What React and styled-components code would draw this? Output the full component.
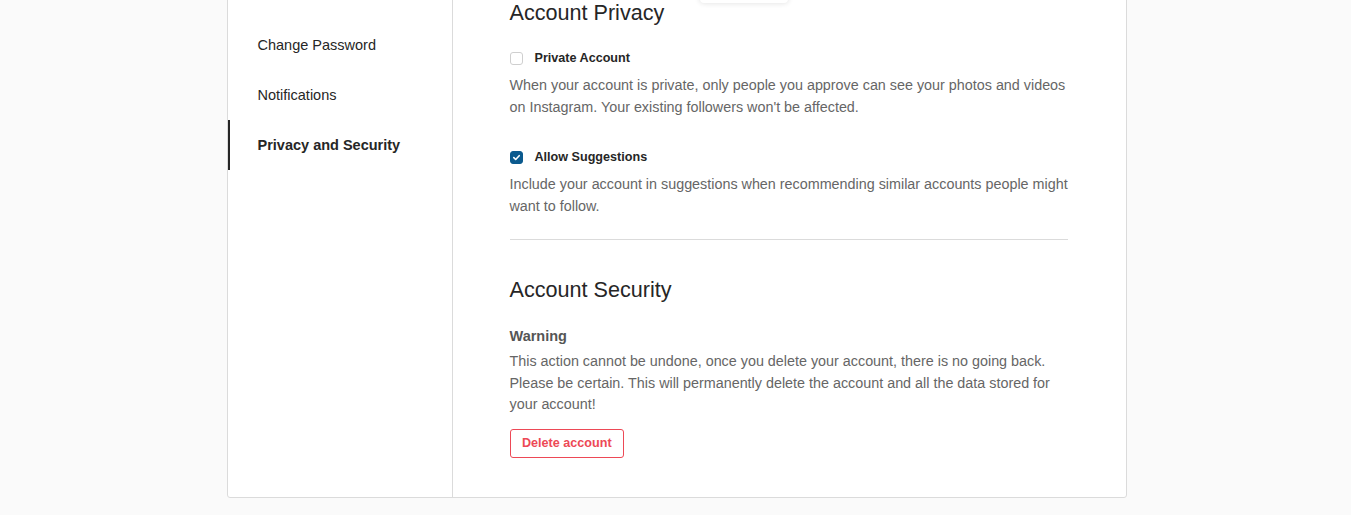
import styled, { createGlobalStyle } from "styled-components";

const GlobalStyle = createGlobalStyle`
  html, body {
    margin: 0;
    padding: 0;
    background: #fafafa;
    font-family: "Liberation Sans", Arial, sans-serif;
    color: #262626;
  }
`;

const Page = styled.div`
  position: relative;
  height: 515px;
  overflow: hidden;
  display: flex;
  justify-content: center;
  padding-left: 2px;
`;

// dropdown menu peeking from the navbar above (scrolled out of view)
const MenuEdge = styled.div`
  position: absolute;
  top: -60px;
  left: 700px;
  width: 88px;
  height: 63px;
  background: #fff;
  border-radius: 4px;
  box-shadow: 0 0 5px 1px rgba(0, 0, 0, 0.0975);
  z-index: 2;
`;

const Card = styled.div`
  width: 898px;
  margin-top: -40px;
  height: 536px;
  display: flex;
  background: #fff;
  border: 1px solid #dbdbdb;
  border-radius: 3px;
`;

const Sidebar = styled.ul`
  list-style: none;
  margin: 0;
  padding: 59px 0 0;
  width: 224px;
  border-right: 1px solid #dbdbdb;
  flex-shrink: 0;
`;

const NavItem = styled.li`
  height: 50px;
  display: flex;
  align-items: center;
  padding-left: 28px;
  border-left: 2px solid ${(p) => (p.$active ? "#262626" : "transparent")};
  font-size: 14.5px;
  font-weight: ${(p) => (p.$active ? 700 : 400)};
  color: #262626;
`;

const Content = styled.div`
  flex: 1;
  padding: 39px 58px 0 57px;
`;

const SectionTitle = styled.h2`
  margin: 0;
  font-size: 21.6px;
  font-weight: 400;
  line-height: 26px;
  color: #262626;
`;

const Option = styled.div`
  margin-top: ${(p) => p.$top}px;
`;

const CheckRow = styled.label`
  display: flex;
  align-items: center;
  gap: 12px;
  height: 18px;
  font-size: 12.6px;
  font-weight: 700;
  color: #262626;
`;

const Box = styled.span`
  width: 13px;
  height: 13px;
  box-sizing: border-box;
  border-radius: 3px;
  border: 1px solid ${(p) => (p.$checked ? "#0b5a8e" : "#cfcfcf")};
  background: ${(p) => (p.$checked ? "#0b5a8e" : "#fff")};
  display: flex;
  align-items: center;
  justify-content: center;
`;

const Desc = styled.p`
  margin: ${(p) => p.$top ?? 8}px -6px 0 0;
  font-size: 14.35px;
  line-height: 21.5px;
  color: #666;
`;

const Divider = styled.hr`
  margin: 22px 0 0;
  border: 0;
  border-top: 1px solid #dbdbdb;
`;

const SecurityBlock = styled.div`
  margin-top: 37px;
`;

const WarningTitle = styled.div`
  margin-top: 23px;
  font-size: 14.5px;
  font-weight: 700;
  color: #555;
  line-height: 20px;
`;

const DeleteButton = styled.button`
  margin-top: 13px;
  height: 29px;
  padding: 0 11.5px;
  background: #fff;
  border: 1px solid #ed4956;
  border-radius: 3px;
  color: #ed4956;
  font-family: "Liberation Sans", Arial, sans-serif;
  font-size: 12.6px;
  font-weight: 700;
`;

const Check = ({ checked, children }) => (
  <CheckRow>
    <Box $checked={checked}>
      {checked && (
        <svg width="9" height="9" viewBox="0 0 10 10">
          <path
            d="M2 5.2 L4.1 7.2 L8 3"
            fill="none"
            stroke="#fff"
            strokeWidth="1.8"
            strokeLinecap="round"
            strokeLinejoin="round"
          />
        </svg>
      )}
    </Box>
    {children}
  </CheckRow>
);

const App = () => (
  <Page>
    <GlobalStyle />
    <MenuEdge />
    <Card>
      <Sidebar>
        <NavItem>Change Password</NavItem>
        <NavItem>Notifications</NavItem>
        <NavItem $active>Privacy and Security</NavItem>
      </Sidebar>
      <Content>
        <SectionTitle>Account Privacy</SectionTitle>
        <Option $top={23}>
          <Check>Private Account</Check>
          <Desc>
            When your account is private, only people you approve can see your
            photos and videos on Instagram. Your existing followers won't be
            affected.
          </Desc>
        </Option>
        <Option $top={30}>
          <Check checked>Allow Suggestions</Check>
          <Desc>
            Include your account in suggestions when recommending similar
            accounts people might want to follow.
          </Desc>
        </Option>
        <Divider />
        <SecurityBlock>
          <SectionTitle>Account Security</SectionTitle>
          <WarningTitle>Warning</WarningTitle>
          <Desc $top={5}>
            This action cannot be undone, once you delete your account, there is
            no going back. Please be certain. This will permanently delete the
            account and all the data stored for your account!
          </Desc>
          <DeleteButton>Delete account</DeleteButton>
        </SecurityBlock>
      </Content>
    </Card>
  </Page>
);

export default App;
